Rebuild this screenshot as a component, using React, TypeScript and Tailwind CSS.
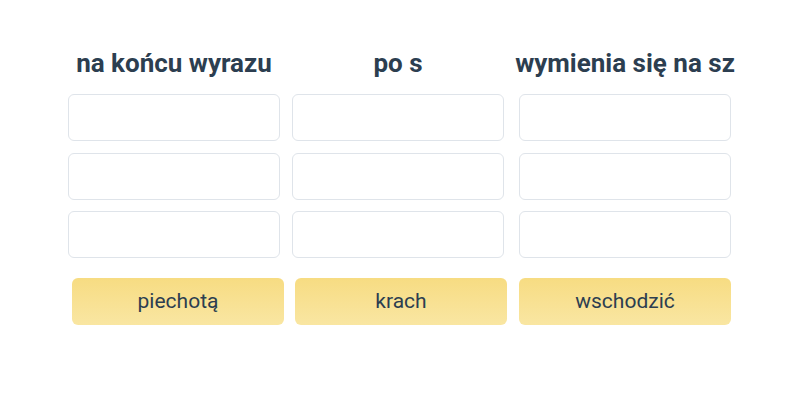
const COLUMNS = [
  { title: 'na końcu wyrazu', className: 'ml-[68px]' },
  { title: 'po s', className: 'ml-[12px]' },
  { title: 'wymienia się na sz', className: 'ml-[15px]' },
]

const WORDS = [
  { word: 'piechotą', className: 'ml-[72px]' },
  { word: 'krach', className: 'ml-[11px]' },
  { word: 'wschodzić', className: 'ml-[12px]' },
]

function DropSlot() {
  return <div className="h-[47px] w-full rounded-[6px] border border-[#dfe4ea] bg-white" />
}

function Column({ title, className }: { title: string; className: string }) {
  return (
    <div className={`flex w-[212px] flex-col items-center ${className}`}>
      <h2 className="whitespace-nowrap text-[26px] font-bold leading-[30px] text-[#2c3e50]">{title}</h2>
      <div className="mt-[16px] flex w-full flex-col gap-[11.5px]">
        <DropSlot />
        <DropSlot />
        <DropSlot />
      </div>
    </div>
  )
}

export default function App() {
  return (
    <div className="h-[400px] w-[800px] bg-white pt-[48px] font-['Roboto',sans-serif]">
      <div className="flex">
        {COLUMNS.map((c) => (
          <Column key={c.title} title={c.title} className={c.className} />
        ))}
      </div>
      <div className="mt-[20px] flex">
        {WORDS.map((w) => (
          <button
            key={w.word}
            className={`flex h-[47px] w-[212px] items-center justify-center rounded-[6px] bg-gradient-to-b from-[#f7dc82] to-[#f9e6a2] text-[21px] text-[#2c3e50] ${w.className}`}
          >
            {w.word}
          </button>
        ))}
      </div>
    </div>
  )
}
